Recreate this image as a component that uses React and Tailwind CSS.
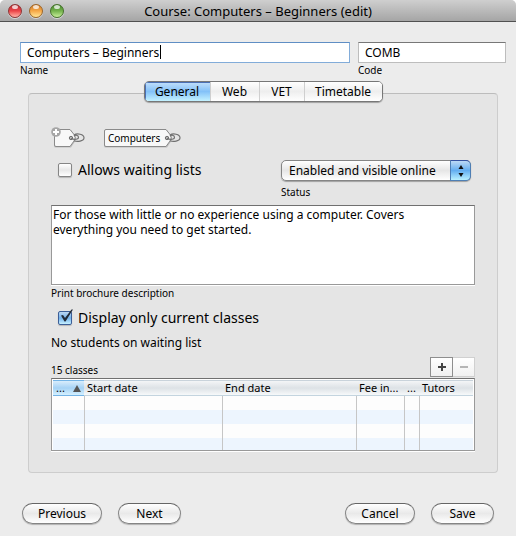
import { useState } from "react";

const TABS = [
  { name: "General", width: "w-[65px]" },
  { name: "Web", width: "w-[49px]" },
  { name: "VET", width: "w-[45px]" },
  { name: "Timetable", width: "w-[78px]" },
];

const PILL =
  "h-[21px] rounded-full border border-[#858585] border-t-[#666] bg-linear-to-b from-white via-[#e9e9e9] via-50% to-white text-center text-[12px] leading-[18px] shadow-[0_1px_1px_rgba(0,0,0,0.25)]";

function Light({ tone, label }) {
  return (
    <button
      aria-label={label}
      className={`relative size-[14px] overflow-hidden rounded-full border shadow-[0_1px_0_rgba(255,255,255,0.5)] ${tone}`}
    >
      <span className="absolute top-0 left-[3px] h-[4px] w-[6px] rounded-full bg-white/75" />
    </button>
  );
}

function TagShape({ width, children, add }) {
  const left = add ? 3 : 0;
  const body = width - 14;
  return (
    <span className="relative block h-[20px]" style={{ width }}>
      <svg width={width} height="20" className="absolute top-0 left-0 overflow-visible" aria-hidden="true">
        <path
          d={`M${left + 1.5} 2 H${body} L${body + 5} 9 V12 L${body} 19.5 H${left + 1.5} Q${left} 19.5 ${left} 18Z`}
          fill="#bdbdbd"
        />
        <path
          d={`M${left + 2} 1.5 H${body - 1} L${body + 3} 6.5 Q${body + 5.5} 10 ${body + 3} 13 L${body - 1} 18.5 H${left + 2} Q${left + 0.5} 18.5 ${left + 0.5} 17 V3 Q${left + 0.5} 1.5 ${left + 2} 1.5Z`}
          fill="#f8f8f8"
          stroke="#8a8a8a"
        />
        <circle cx={body} cy="10" r="1.7" fill="#b5b5b5" stroke="#6e6e6e" />
        <path
          d={`M${body + 3} 7 C${body + 6} 5 ${body + 13} 6 ${body + 13} 9.8 C${body + 13} 13.5 ${body + 6} 14 ${body + 3} 12.8 M${body} 10.5 C${body + 5} 12.5 ${body + 9} 10.5 ${body + 7} 8 C${body + 6} 7 ${body + 4} 7 ${body + 3} 8`}
          fill="none"
          stroke="#727272"
          strokeWidth="1.2"
        />
        {add && (
          <g>
            <circle cx="5" cy="4" r="4.8" fill="#a6a6a6" />
            <path d="M5 1 V7 M2 4 H8" stroke="#fff" strokeWidth="2" />
          </g>
        )}
      </svg>
      <span className="relative block pl-[4px] text-[10px] leading-[20px]">{children}</span>
    </span>
  );
}

function Tick({ label, checked, onChange }) {
  return (
    <label className="flex h-[18px] items-center gap-[6px] pl-[7px] text-[14px] leading-[18px]">
      <span className="relative size-[14px]">
        <input
          type="checkbox"
          checked={checked}
          onChange={(e) => onChange(e.target.checked)}
          className="block size-[14px] appearance-none rounded-[2px] border border-[#858585] bg-linear-to-b from-white via-[#e8e8e8] to-white shadow-[0_1px_1px_rgba(0,0,0,0.2)] checked:border-[#3c5f98] checked:from-[#bcd7f2] checked:via-[#73b2ec] checked:to-[#c6f0ff]"
        />
        {checked && (
          <svg viewBox="0 0 16 16" className="pointer-events-none absolute -top-[2px] left-0 size-[16px]" aria-hidden="true">
            <path d="M3 6.5 L5 6 L7 9 L13.5 0.5 L15 0.5 L7.5 12.5 L6.5 12.5Z" fill="#222b38" />
          </svg>
        )}
      </span>
      {label}
    </label>
  );
}

function ClassTable() {
  const cell = "border-l border-[#c6c6c6] p-0 first:border-l-0";
  const head = "overflow-hidden p-0 pl-[3px] text-left font-normal whitespace-nowrap";
  return (
    <div className="border border-[#999] border-t-[#707070] bg-white px-px pt-px shadow-[0_1px_0_#fff]">
      <table className="w-full table-fixed border-separate border-spacing-0 text-[11px] leading-[14px]">
        <colgroup>
          <col className="w-[31px]" />
          <col className="w-[138px]" />
          <col />
          <col className="w-[48px]" />
          <col className="w-[15px]" />
          <col className="w-[54px]" />
        </colgroup>
        <thead>
          <tr className="h-[15px] bg-linear-to-b from-[#f7f8f9] via-[#dde2e6] via-50% to-[#fafcfd]">
            <th className="border-y border-[#74b4e6] bg-linear-to-b from-[#d9edfc] via-[#a5d2f5] to-[#d4f0ff] p-0 pl-[3px] font-normal">
              <span className="flex items-center gap-[8px]">
                ...
                <svg width="8" height="7" aria-hidden="true">
                  <path d="M4 0 L8 7 H0Z" fill="#555" />
                </svg>
              </span>
            </th>
            {["Start date", "End date", "Fee in...", "...", "Tutors"].map((h, i) => (
              <th key={i} className={`border-y border-t-[#c9d3db] border-b-[#c3d4df] ${head}`}>
                {h}
              </th>
            ))}
          </tr>
        </thead>
        <tbody>
          {["h-[14px] bg-[#fdfdfd]", "h-[14px] bg-[#edf5fe]", "h-[14px] bg-[#fdfdfd]", "h-[12px] bg-[#edf5fe]"].map((r, i) => (
            <tr key={i} className={r}>
              {[0, 1, 2, 3, 4, 5].map((c) => (
                <td key={c} className={cell} />
              ))}
            </tr>
          ))}
        </tbody>
      </table>
    </div>
  );
}

export default function App() {
  const [tab, setTab] = useState("General");
  const [waiting, setWaiting] = useState(false);
  const [current, setCurrent] = useState(true);

  return (
    <div className="min-h-screen overflow-hidden rounded-t-[5px] bg-[#ececec] font-['Noto_Sans','Open_Sans',sans-serif] text-black">
      <header className="grid h-[22px] grid-cols-[80px_1fr_80px] items-center border-b border-[#515151] bg-linear-to-b from-[#cfcfcf] to-[#a5a5a5]">
        <div className="flex gap-[7px] pl-[8px]">
          <Light label="Close" tone="border-[#8d3434] bg-linear-to-b from-[#b92b30] via-[#ec4449] to-[#ffb0a8]" />
          <Light label="Minimise" tone="border-[#9b6528] bg-linear-to-b from-[#cf7b2b] via-[#f6a947] to-[#ffe795]" />
          <Light label="Zoom" tone="border-[#45702b] bg-linear-to-b from-[#46862f] via-[#75b34d] to-[#c8f09a]" />
        </div>
        <h1 className="text-center text-[13px] leading-[20px] whitespace-nowrap">Course: Computers – Beginners (edit)</h1>
      </header>

      <div className="grid grid-cols-[1fr_148px] gap-[8px] pt-[20px] pr-[10px] pl-[20px]">
        <div className="relative">
          <input
            id="name"
            defaultValue="Computers – Beginners"
            className="peer block h-[21px] w-full border border-[#82acd9] border-t-[#5f8ec4] bg-white px-[6px] text-[12px] outline-none"
          />
          <span className="pointer-events-none absolute top-[3px] left-[140px] h-[14px] w-px bg-black peer-focus:hidden" />
          <label htmlFor="name" className="block text-[10px] leading-[14px]">Name</label>
        </div>
        <div>
          <input
            id="code"
            defaultValue="COMB"
            className="block h-[21px] w-full border border-[#bdbdbd] border-t-[#777] bg-white px-[6px] text-[12px] outline-none"
          />
          <label htmlFor="code" className="block text-[10px] leading-[14px]">Code</label>
        </div>
      </div>

      <main className="pt-[4px] pr-[18px] pl-[28px]">
        <div className="relative flex justify-center">
          <div role="tablist" className="flex h-[21px] overflow-hidden rounded-[5px] border border-[#777] bg-white shadow-[0_1px_1px_rgba(0,0,0,0.3)]">
            {TABS.map((t) => (
              <button
                key={t.name}
                role="tab"
                aria-selected={tab === t.name}
                onClick={() => setTab(t.name)}
                className={`border-l border-[#cfcfcf] text-[12px] leading-[18px] first:border-l-0 ${t.width} ${
                  tab === t.name
                    ? "bg-linear-to-b from-[#c3e0fa] via-[#83c1f8] via-50% to-[#c4f2ff] shadow-[inset_1px_1px_0_#4a6fb5]"
                    : "bg-linear-to-b from-white via-[#eeeeee] via-50% to-white"
                }`}
              >
                {t.name}
              </button>
            ))}
          </div>
        </div>

        <section className="-mt-[9px] rounded-[4px] border border-[#cdcdcd] border-t-[#bcbcbc] bg-[#e5e5e5] px-[22px] pt-[34px] pb-[21px]">
          <div className="flex gap-[19px]">
            <button aria-label="Add tag"><TagShape width={34} add /></button>
            <TagShape width={77}>Computers</TagShape>
          </div>

          <div className="flex items-start justify-between pt-[12px]">
            <div className="pt-px">
              <Tick label="Allows waiting lists" checked={waiting} onChange={setWaiting} />
            </div>
            <div className="w-[194px]">
              <div className="relative w-[190px]">
                <select
                  id="status"
                  className="block h-[21px] w-full appearance-none rounded-[5px] border border-[#858585] bg-linear-to-b from-white via-[#e6e6e6] to-white pr-[22px] pl-[7px] text-[12px] leading-[18px] shadow-[0_1px_1px_rgba(0,0,0,0.3)]"
                >
                  <option>Enabled and visible online</option>
                </select>
                <span className="pointer-events-none absolute top-0 right-0 flex h-[21px] w-[21px] items-center justify-center rounded-r-[5px] border border-[#4e7fb5] border-t-[#3552a0] bg-linear-to-b from-[#bcd9f5] via-[#63aef0] to-[#b8f1ff]">
                  <svg width="6" height="12" aria-hidden="true">
                    <path d="M3 0 L5.5 4 H0.5Z M0.5 8 H5.5 L3 12Z" fill="#111" />
                  </svg>
                </span>
              </div>
              <label htmlFor="status" className="block pt-[4px] text-[10px] leading-[14px]">Status</label>
            </div>
          </div>

          <textarea
            id="brochure"
            defaultValue="For those with little or no experience using a computer. Covers everything you need to get started."
            className="mt-[6px] block h-[80px] w-full resize-none border border-[#999] border-t-[#707070] bg-white py-px pr-[16px] pl-px text-[12px] leading-[15px] shadow-[0_1px_0_#fff] outline-none"
          />
          <label htmlFor="brochure" className="block pt-px text-[10px] leading-[14px]">Print brochure description</label>

          <div className="pt-[9px]">
            <Tick label="Display only current classes" checked={current} onChange={setCurrent} />
          </div>
          <p className="pt-[8px] text-[12px] leading-[16px]">No students on waiting list</p>

          <div className="flex items-end justify-between pt-[6px] pb-px">
            <span className="text-[10px] leading-[14px]">15 classes</span>
            <div className="flex">
              <button aria-label="Add class" className="flex h-[20px] w-[23px] items-center justify-center border border-[#8e8e8e] bg-linear-to-b from-white to-[#efefef]">
                <svg width="8" height="8" aria-hidden="true"><path d="M4 0 V8 M0 4 H8" stroke="#444" strokeWidth="2" /></svg>
              </button>
              <button aria-label="Remove class" className="flex h-[20px] w-[22px] items-center justify-center border border-l-0 border-[#d0d0d0] bg-linear-to-b from-white to-[#f1f1f1]">
                <svg width="8" height="8" aria-hidden="true"><path d="M0 4 H8" stroke="#b5b5b5" strokeWidth="2" /></svg>
              </button>
            </div>
          </div>
          <ClassTable />
        </section>
      </main>

      <footer className="flex justify-between pt-[30px] pr-[22px] pb-[12px] pl-[22px]">
        <div className="flex gap-[16px]">
          <button className={`w-[80px] ${PILL}`}>Previous</button>
          <button className={`w-[63px] ${PILL}`}>Next</button>
        </div>
        <div className="flex gap-[16px]">
          <button className={`w-[70px] ${PILL}`}>Cancel</button>
          <button className={`w-[63px] ${PILL}`}>Save</button>
        </div>
      </footer>
    </div>
  );
}
